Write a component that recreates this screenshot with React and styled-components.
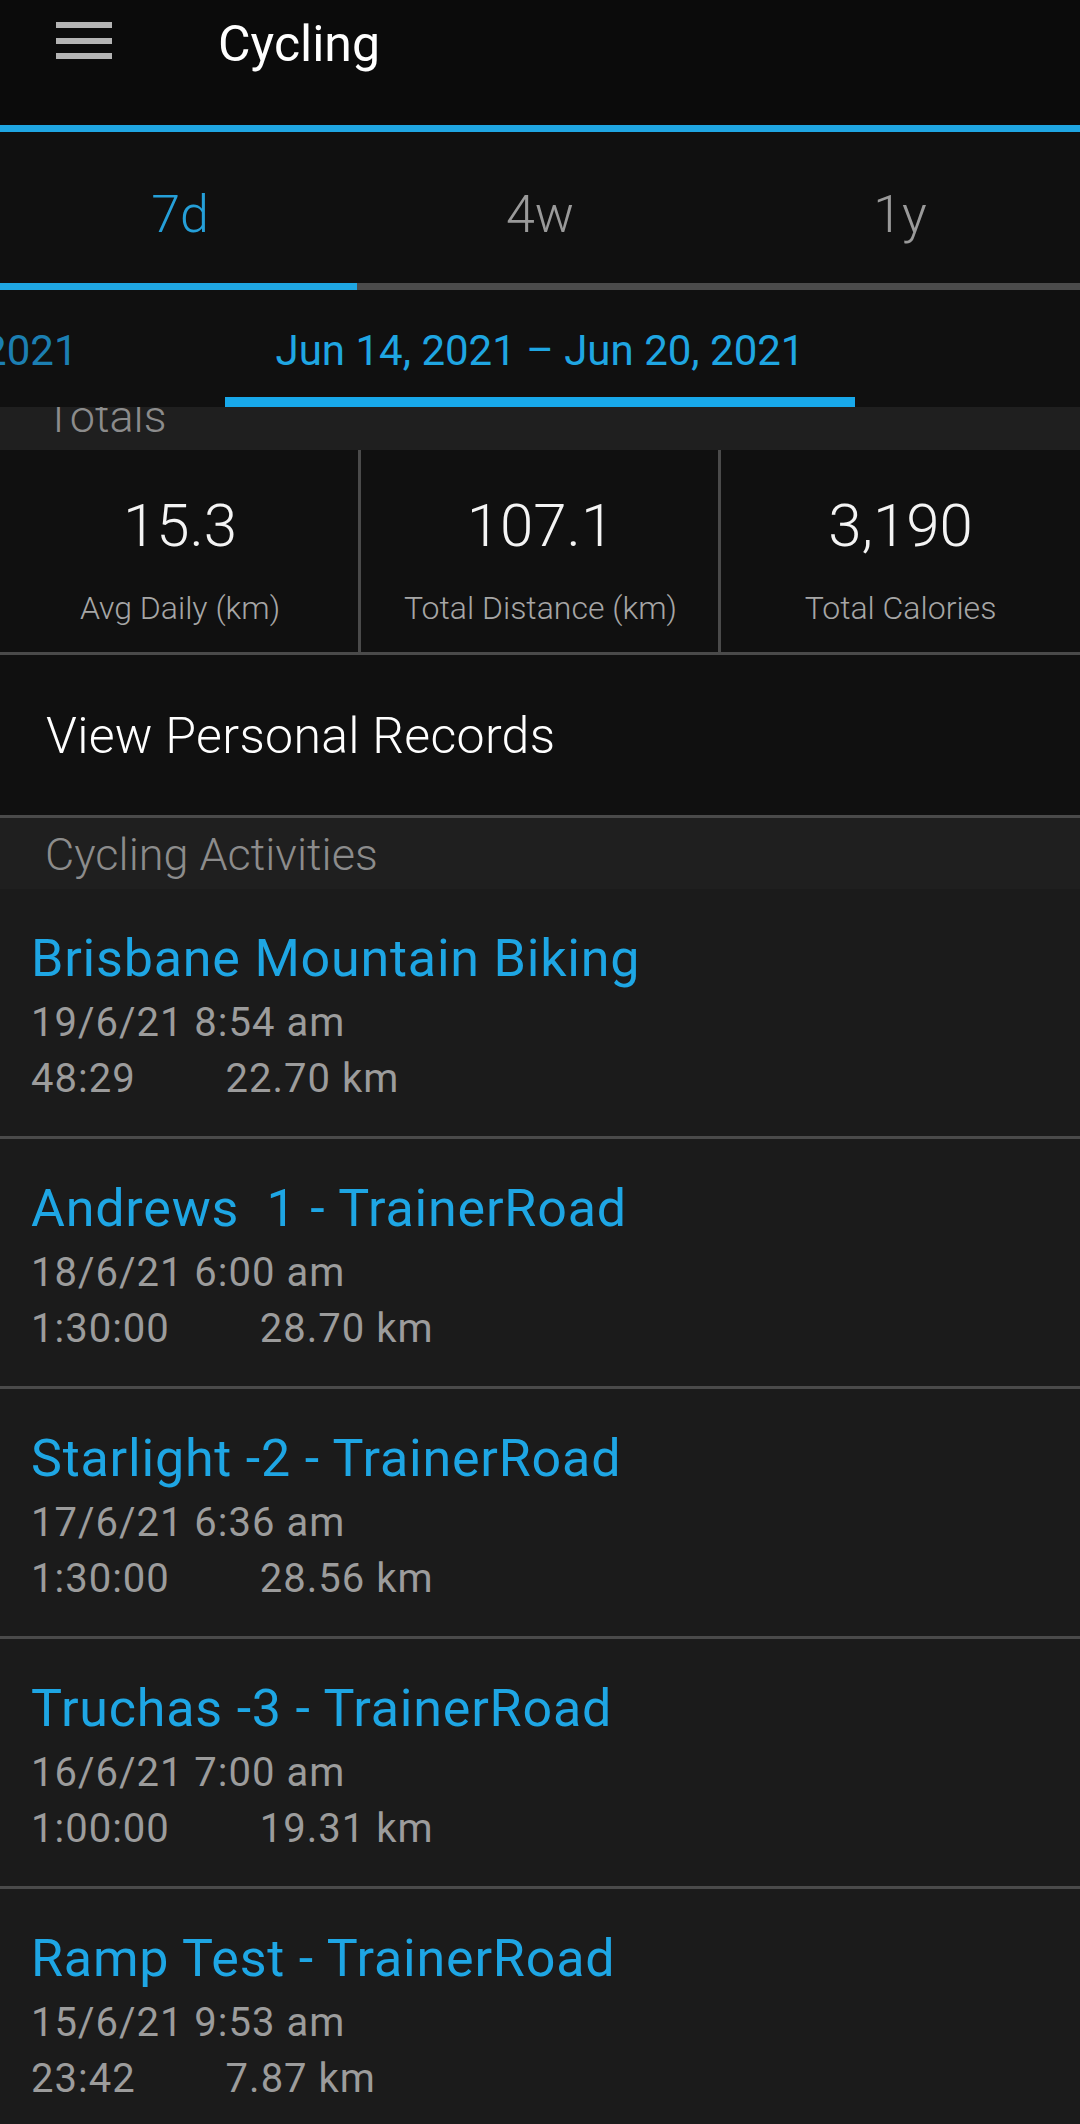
import React from "react";
import styled, { createGlobalStyle } from "styled-components";

const Global = createGlobalStyle`
  html, body {
    margin: 0;
    padding: 0;
    background: #1b1b1b;
    font-family: Roboto, "Noto Sans", "Liberation Sans", sans-serif;
    -webkit-font-smoothing: antialiased;
  }
  body { overflow: hidden; }
  * { box-sizing: border-box; }
`;

const BLUE = "#1fa6e2";
const DIVIDER = "#4a4a4a";

const Page = styled.div`
  width: 1080px;
  height: 2124px;
  overflow: hidden;
  background: #1b1b1b;
`;

const AppBar = styled.header`
  height: 132px;
  background: #0b0b0b;
  border-bottom: 7px solid ${BLUE};
  display: flex;
  align-items: flex-start;
  padding: 0 0 0 56px;
`;

const Toolbar = styled.div`
  height: 84px;
  display: flex;
  align-items: center;
  gap: 106px;
`;

const Burger = styled.div`
  width: 56px;
  display: flex;
  flex-direction: column;
  gap: 9.5px;
  margin-top: -3px;
`;

const BurgerBar = styled.span`
  display: block;
  height: 6px;
  background: #b4b4b4;
`;

const Title = styled.h1`
  margin: 0;
  padding-top: 3px;
  font-size: 50px;
  font-weight: 400;
  color: #ffffff;
  line-height: 1;
`;

const Tabs = styled.nav`
  display: grid;
  grid-template-columns: repeat(3, 1fr);
  background: #101010;
  height: 151px;
`;

const Tab = styled.div`
  padding-top: 52px;
  text-align: center;
  font-size: 52px;
  font-weight: 300;
  line-height: 61px;
  color: ${(p) => (p.$active ? "#259fd8" : "#9a9a9a")};
`;

const Indicator = styled.div`
  height: 7px;
  background: #4b4b4b;
  display: flex;
`;

const IndicatorFill = styled.div`
  width: 357px;
  background: ${BLUE};
`;

const Pager = styled.div`
  height: 117px;
  background: #101010;
  display: grid;
  grid-template-columns: minmax(0, 1fr) auto minmax(0, 1fr);
  overflow: hidden;
`;

const PagerSide = styled.div`
  min-width: 0;
  display: flex;
  justify-content: ${(p) => (p.$left ? "flex-end" : "flex-start")};
`;

const PagerItem = styled.div`
  flex-shrink: 0;
  padding: 36px 51px 0;
  font-size: 42px;
  font-weight: 400;
  line-height: 49px;
  white-space: nowrap;
  color: ${(p) => (p.$current ? BLUE : "#1c7fb2")};
  border-bottom: 10px solid ${(p) => (p.$current ? "#18a8ea" : "transparent")};
  margin-right: ${(p) => (p.$prev ? "96px" : "0")};
`;

const SectionHeader = styled.div`
  height: ${(p) => p.$h}px;
  background: #1f1f1f;
  overflow: hidden;
  padding-left: 45px;
`;

const SectionLabel = styled.div`
  margin-top: ${(p) => p.$offset}px;
  font-size: 45px;
  font-weight: 300;
  line-height: 50px;
  color: #8c8c8c;
`;

const Stats = styled.div`
  display: grid;
  grid-template-columns: 1fr 1fr 1fr;
  background: #101010;
  border-bottom: 3px solid ${DIVIDER};
`;

const StatCell = styled.div`
  height: 202px;
  padding-top: 41px;
  text-align: center;
  border-left: ${(p) => (p.$first ? "none" : `3px solid ${DIVIDER}`)};
  margin-left: ${(p) => (p.$first ? "0" : "-2px")};
`;

const StatValue = styled.div`
  font-size: 60px;
  font-weight: 300;
  line-height: 70px;
  color: #f4f4f4;
`;

const StatLabel = styled.div`
  margin-top: 29px;
  font-size: 32px;
  font-weight: 300;
  line-height: 37px;
  color: #a6a6a6;
`;

const RecordsRow = styled.div`
  height: 163px;
  background: #101010;
  border-bottom: 3px solid ${DIVIDER};
  padding: 53px 0 0 46px;
  font-size: 50px;
  font-weight: 300;
  letter-spacing: 0.3px;
  line-height: 56px;
  color: #ffffff;
`;

const Activity = styled.div`
  background: #1b1b1b;
  padding: 40px 0 29px 31px;
  border-bottom: 3px solid ${DIVIDER};
`;

const ActivityName = styled.div`
  font-size: 52px;
  font-weight: 400;
  letter-spacing: 0.8px;
  line-height: 60px;
  color: #1ea6e4;
  white-space: pre;
`;

const ActivityDate = styled.div`
  margin-top: 6px;
  font-size: 40px;
  font-weight: 400;
  letter-spacing: 1px;
  line-height: 56px;
  color: #9c9c9c;
`;

const ActivityStats = styled.div`
  display: flex;
  font-size: 40px;
  font-weight: 400;
  letter-spacing: 1px;
  line-height: 56px;
  color: #9c9c9c;
`;

const Distance = styled.span`
  margin-left: 90px;
`;

const activities = [
  { name: "Brisbane Mountain Biking", date: "19/6/21 8:54 am", time: "48:29", dist: "22.70 km" },
  { name: "Andrews  1 - TrainerRoad", date: "18/6/21 6:00 am", time: "1:30:00", dist: "28.70 km" },
  { name: "Starlight -2 - TrainerRoad", date: "17/6/21 6:36 am", time: "1:30:00", dist: "28.56 km" },
  { name: "Truchas -3 - TrainerRoad", date: "16/6/21 7:00 am", time: "1:00:00", dist: "19.31 km" },
  { name: "Ramp Test - TrainerRoad", date: "15/6/21 9:53 am", time: "23:42", dist: "7.87 km" },
];

const stats = [
  { value: "15.3", label: "Avg Daily (km)" },
  { value: "107.1", label: "Total Distance (km)" },
  { value: "3,190", label: "Total Calories" },
];

export default function App() {
  return (
    <Page>
      <Global />
      <AppBar>
        <Toolbar>
          <Burger>
            <BurgerBar />
            <BurgerBar />
            <BurgerBar />
          </Burger>
          <Title>Cycling</Title>
        </Toolbar>
      </AppBar>
      <Tabs>
        <Tab $active>7d</Tab>
        <Tab>4w</Tab>
        <Tab>1y</Tab>
      </Tabs>
      <Indicator>
        <IndicatorFill />
      </Indicator>
      <Pager>
        <PagerSide $left>
          <PagerItem $prev>Jun 7, 2021 – Jun 13, 2021</PagerItem>
        </PagerSide>
        <PagerItem $current>Jun 14, 2021 – Jun 20, 2021</PagerItem>
        <PagerSide />
      </Pager>
      <SectionHeader $h={43}>
        <SectionLabel $offset={-15}>Totals</SectionLabel>
      </SectionHeader>
      <Stats>
        {stats.map((s, i) => (
          <StatCell key={s.label} $first={i === 0}>
            <StatValue>{s.value}</StatValue>
            <StatLabel>{s.label}</StatLabel>
          </StatCell>
        ))}
      </Stats>
      <RecordsRow>View Personal Records</RecordsRow>
      <SectionHeader $h={71}>
        <SectionLabel $offset={12}>Cycling Activities</SectionLabel>
      </SectionHeader>
      {activities.map((a) => (
        <Activity key={a.name}>
          <ActivityName>{a.name}</ActivityName>
          <ActivityDate>{a.date}</ActivityDate>
          <ActivityStats>
            <span>{a.time}</span>
            <Distance>{a.dist}</Distance>
          </ActivityStats>
        </Activity>
      ))}
    </Page>
  );
}
